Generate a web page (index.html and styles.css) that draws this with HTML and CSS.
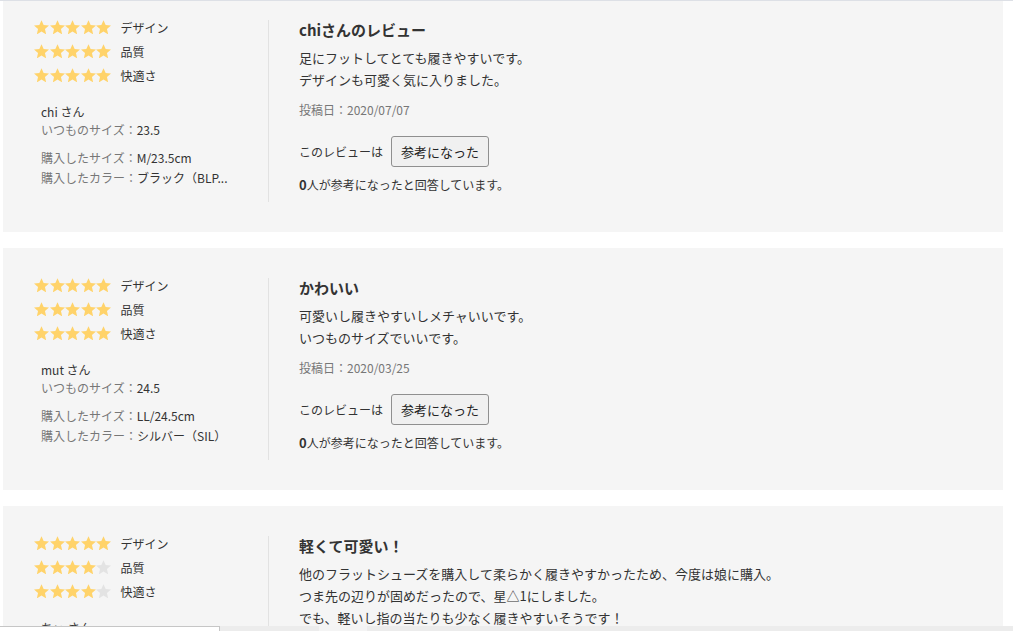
FILE: index.html
```html
<!DOCTYPE html>
<html lang="ja">
<head>
  <meta charset="UTF-8" />
  <meta name="viewport" content="width=device-width, initial-scale=1.0" />
  <title>レビュー一覧</title>
  <link rel="stylesheet" href="styles.css">
</head>
<body>
  <div class="page">
    <div class="reviews">

      <div class="review">
        <div class="meta">
          <div class="ratings">
            <div class="rating"><span class="stars" data-rating="5"></span><span class="rating-name">デザイン</span></div>
            <div class="rating"><span class="stars" data-rating="5"></span><span class="rating-name">品質</span></div>
            <div class="rating"><span class="stars" data-rating="5"></span><span class="rating-name">快適さ</span></div>
          </div>
          <div class="user">
            <p class="user-name">chi さん</p>
            <p><span class="label">いつものサイズ：</span>23.5</p>
          </div>
          <div class="purchase">
            <p><span class="label">購入したサイズ：</span>M/23.5cm</p>
            <p><span class="label">購入したカラー：</span>ブラック（BLP...</p>
          </div>
        </div>
        <div class="body">
          <h3 class="title">chiさんのレビュー</h3>
          <p class="text">足にフットしてとても履きやすいです。<br>デザインも可愛く気に入りました。</p>
          <p class="date">投稿日：2020/07/07</p>
          <div class="helpful">
            <span>このレビューは</span>
            <button class="helpful-btn">参考になった</button>
          </div>
          <p class="count"><strong>0</strong>人が参考になったと回答しています。</p>
        </div>
      </div>

      <div class="review">
        <div class="meta">
          <div class="ratings">
            <div class="rating"><span class="stars" data-rating="5"></span><span class="rating-name">デザイン</span></div>
            <div class="rating"><span class="stars" data-rating="5"></span><span class="rating-name">品質</span></div>
            <div class="rating"><span class="stars" data-rating="5"></span><span class="rating-name">快適さ</span></div>
          </div>
          <div class="user">
            <p class="user-name">mut さん</p>
            <p><span class="label">いつものサイズ：</span>24.5</p>
          </div>
          <div class="purchase">
            <p><span class="label">購入したサイズ：</span>LL/24.5cm</p>
            <p><span class="label">購入したカラー：</span>シルバー（SIL）</p>
          </div>
        </div>
        <div class="body">
          <h3 class="title">かわいい</h3>
          <p class="text">可愛いし履きやすいしメチャいいです。<br>いつものサイズでいいです。</p>
          <p class="date">投稿日：2020/03/25</p>
          <div class="helpful">
            <span>このレビューは</span>
            <button class="helpful-btn">参考になった</button>
          </div>
          <p class="count"><strong>0</strong>人が参考になったと回答しています。</p>
        </div>
      </div>

      <div class="review">
        <div class="meta">
          <div class="ratings">
            <div class="rating"><span class="stars" data-rating="5"></span><span class="rating-name">デザイン</span></div>
            <div class="rating"><span class="stars" data-rating="4"></span><span class="rating-name">品質</span></div>
            <div class="rating"><span class="stars" data-rating="4"></span><span class="rating-name">快適さ</span></div>
          </div>
          <div class="user">
            <p class="user-name">ちぃ さん</p>
            <p><span class="label">いつものサイズ：</span>23.0</p>
          </div>
          <div class="purchase">
            <p><span class="label">購入したサイズ：</span>M/23.5cm</p>
            <p><span class="label">購入したカラー：</span>ベージュ（BE）</p>
          </div>
        </div>
        <div class="body">
          <h3 class="title">軽くて可愛い！</h3>
          <p class="text">他のフラットシューズを購入して柔らかく履きやすかったため、今度は娘に購入。<br>つま先の辺りが固めだったので、星△1にしました。<br>でも、軽いし指の当たりも少なく履きやすいそうです！</p>
          <p class="date">投稿日：2020/03/12</p>
          <div class="helpful">
            <span>このレビューは</span>
            <button class="helpful-btn">参考になった</button>
          </div>
          <p class="count"><strong>0</strong>人が参考になったと回答しています。</p>
        </div>
      </div>

    </div>
  </div>

  <div class="bottom-bar">
    <div class="bar-box"></div>
    <div class="bar-thumb"></div>
  </div>

  <script>
    const STAR = '<svg class="star" viewBox="1.2 1.3 21.6 21"><path d="M12 1.5l3.1 7.1 7.7.7-5.8 5.1 1.7 7.6L12 18l-6.7 4 1.7-7.6-5.8-5.1 7.7-.7z"/></svg>';

    document.querySelectorAll(".stars").forEach(el => {
      const rating = Number(el.dataset.rating);
      let html = "";
      for (let i = 1; i <= 5; i++) {
        html += STAR.replace('class="star"', i <= rating ? 'class="star on"' : 'class="star"');
      }
      el.innerHTML = html;
    });
  </script>
</body>
</html>
```

FILE: styles.css
```css
:root {
  --card: #f5f5f5;
  --line: #e2e2e2;
  --text: #333;
  --muted: #777;
  --gold: #ffd36a;
}

body {
  margin: 0;
  font-family: "Noto Sans CJK JP", "Noto Sans", sans-serif;
  color: var(--text);
  background: #fff;
}

p, h3 {
  margin: 0;
}

.page {
  border-top: 1px solid #dde0e6;
  height: 630px;
  overflow: hidden;
}

.reviews {
  margin: -11px 0 0 3px;
  width: 1000px;
  display: flex;
  flex-direction: column;
  gap: 16px;
}

.review {
  display: flex;
  background: var(--card);
  min-height: 242px;
  box-sizing: border-box;
  padding: 30px 0;
}

/* left column */
.meta {
  width: 266px;
  flex-shrink: 0;
  box-sizing: border-box;
  padding-left: 31px;
  border-right: 1px solid var(--line);
}

.ratings {
  margin-top: -5px;
}

.rating {
  display: flex;
  align-items: center;
  height: 24px;
  font-size: 12px;
}

.stars {
  display: flex;
  gap: 0.6px;
}

.star {
  width: 15px;
  height: 14.6px;
  fill: #e3e3e3;
}

.star.on {
  fill: var(--gold);
}

.rating-name {
  margin-left: 9px;
}

.user, .purchase {
  padding-left: 7px;
  font-size: 12px;
  white-space: nowrap;
}

.user {
  margin-top: 16px;
  line-height: 18px;
}

.purchase {
  margin-top: 9px;
  line-height: 20px;
}

.label {
  color: var(--muted);
}

/* right column */
.body {
  padding-left: 30px;
}

.title {
  font-size: 15px;
  font-weight: bold;
  line-height: 20px;
}

.text {
  margin-top: 7px;
  font-size: 13px;
  line-height: 22px;
}

.date {
  margin-top: 9px;
  font-size: 12px;
  line-height: 20px;
  color: var(--muted);
}

.helpful {
  margin-top: 16px;
  display: flex;
  align-items: center;
  gap: 8px;
  font-size: 12px;
}

.helpful-btn {
  height: 31px;
  padding: 0 9px;
  font-family: inherit;
  font-size: 13px;
  color: #222;
  background: #f0f0f0;
  border: 1px solid #8f8f8f;
  border-radius: 3px;
  cursor: pointer;
}

.helpful-btn:hover {
  background: #e5e5e5;
}

.count {
  margin-top: 8px;
  font-size: 12px;
  line-height: 20px;
}

.count strong {
  font-size: 13px;
}

/* strip at the bottom of the window */
.bottom-bar {
  position: fixed;
  left: 0;
  right: 0;
  bottom: 0;
  height: 5px;
  display: flex;
  background: #ececec;
}

.bar-box {
  width: 220px;
  box-sizing: border-box;
  background: #fff;
  border-top: 1px solid #c6c6c6;
  border-right: 1px solid #c6c6c6;
}

.bar-thumb {
  margin-left: 99px;
  width: 48px;
  background: #f4f4f4;
}
```
